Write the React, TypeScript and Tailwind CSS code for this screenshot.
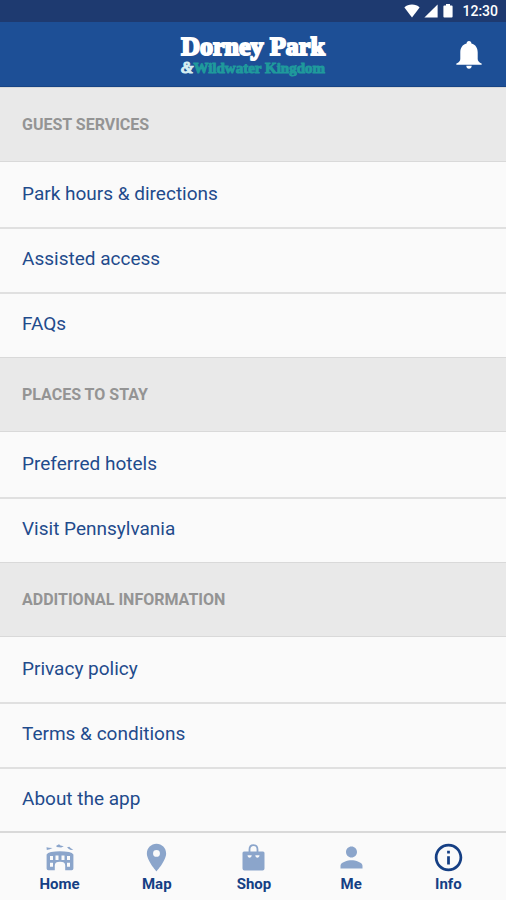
import type { ReactNode } from "react";
import { MdInfoOutline, MdPerson, MdPlace } from "react-icons/md";

const sections = [
  { title: "GUEST SERVICES", items: ["Park hours & directions", "Assisted access", "FAQs"] },
  { title: "PLACES TO STAY", items: ["Preferred hotels", "Visit Pennsylvania"] },
  { title: "ADDITIONAL INFORMATION", items: ["Privacy policy", "Terms & conditions", "About the app"] },
];

function StatusBar() {
  return (
    <div className="flex h-[22px] items-center justify-end gap-1 bg-[#1e3a70] pr-2 text-white">
      <svg className="h-[14px] w-[16px]" viewBox="0 0 16 14" fill="currentColor" aria-hidden="true">
        <path d="M8 13.6.4 3.4C2.400 1.600 5 .6 8 .6s5.600 1 7.600 2.800z" />
      </svg>
      <svg className="h-[14px] w-[14px]" viewBox="0 0 14 14" fill="currentColor" aria-hidden="true">
        <path d="M13.600.4v13.200H.4z" />
      </svg>
      <svg className="h-[14px] w-[12px]" viewBox="0 0 12 14" fill="currentColor" aria-hidden="true">
        <path d="M4 0h4v1.500h1.700q.9 0 .9.900v10.200q0 1-.9 1H2.300q-.9 0-.9-1V2.400q0-.9.9-.9H4z" />
      </svg>
      <span className="ml-1 text-[14px] leading-[20px] font-medium">12:30</span>
    </div>
  );
}

function Logo() {
  return (
    <h1 className="flex flex-col items-center pt-1 font-['Liberation_Serif',serif] font-bold whitespace-nowrap">
      <span className="text-[26px] leading-[24px] text-white [-webkit-text-stroke:2px_#fff] [paint-order:stroke]">Dorney Park</span>
      <span className="flex items-center text-[15px] leading-[18px] text-[#1f9a9c] [-webkit-text-stroke:1px_#1f9a9c]">
        <span className="text-[16px] italic text-[#d5eef2] [-webkit-text-stroke:1px_#d5eef2]">&amp;</span>
        Wildwater Kingdom
      </span>
    </h1>
  );
}

function BellIcon() {
  return (
    <svg className="h-7 w-[26px]" viewBox="0 0 26 28" fill="currentColor" aria-hidden="true">
      <path d="M13 0c1.500 0 2.400 1 2.400 2.500 4.200 1.100 6.300 4.400 6.300 8.900v6.300c0 2 .9 3.300 3.700 4.700.8.500.6 1.300-.3 1.300H.9c-.9 0-1.100-.8-.3-1.300 2.800-1.400 3.700-2.700 3.700-4.700v-6.300c0-4.500 2.100-7.800 6.300-8.900C10.600 1 11.500 0 13 0z" />
      <path d="M10.300 24.800h5.400c0 1.800-1.100 3-2.700 3s-2.700-1.200-2.700-3z" />
    </svg>
  );
}

function GateIcon() {
  return (
    <svg className="h-[27px] w-7" viewBox="0 0 28 27" fill="currentColor" aria-hidden="true">
      <path d="M.5 3.200 3 3.700l3.500.3-2.700 1.300-3 .8zM10.300 1.700 13 .2l1.500 1.300 3.300.7-2.600 1.200-4.600-.3zM21 3.200l2.300-.5 1.500 1.500 2.500 1.500-2.500.2-2-1z" />
      <path
        fillRule="evenodd"
        d="M.6 10.500Q1.500 8.500 5 8q9-1.400 18 0 3.500.5 4.400 2.500v14q0 1.700-1.700 1.700h-6.500v-5q0-3.400-5.200-3.400t-5.200 3.400v5H2.300q-1.700 0-1.700-1.700zM4 12v4h3v-4zm5.500-.5V16h3v-4.500zm6 0V16h3v-4.500zM21 12v4h3v-4zM4 18.700v4h3v-4zm17 0v4h3v-4z"
      />
    </svg>
  );
}

function BagIcon() {
  return (
    <svg className="h-[27px] w-[23px]" viewBox="0 0 23 27" fill="currentColor" aria-hidden="true">
      <path d="M7.500 10V5.600C7.500 2.800 9.100 1.100 11.500 1.100s4 1.700 4 4.500V10" fill="none" stroke="currentColor" strokeWidth="1.800" />
      <path
        fillRule="evenodd"
        d="M2 7.500h19q1.500 0 1.500 1.500v15.500q0 2-2 2h-18q-2 0-2-2V9Q.5 7.500 2 7.500zM5.500 11.300c0 3.300 4.200 3.300 4.200 0zm7.800 0c0 3.300 4.200 3.300 4.200 0z"
      />
    </svg>
  );
}

const tabs: { label: string; icon: ReactNode; active?: boolean }[] = [
  { label: "Home", icon: <GateIcon /> },
  { label: "Map", icon: <MdPlace size={33} /> },
  { label: "Shop", icon: <BagIcon /> },
  { label: "Me", icon: <MdPerson size={33} /> },
  { label: "Info", icon: <MdInfoOutline size={33} />, active: true },
];

export default function App() {
  return (
    <div className="flex min-h-screen flex-col bg-[#fafafa] font-['Roboto',sans-serif]">
      <StatusBar />
      <header className="grid h-[65px] grid-cols-[1fr_auto_1fr] items-center border-b border-[#174485] bg-[#1d4f96] text-white">
        <span />
        <Logo />
        <button type="button" aria-label="Notifications" className="mr-6 justify-self-end pt-0.5">
          <BellIcon />
        </button>
      </header>
      <main className="grow">
        {sections.map((section) => (
          <section key={section.title}>
            <h2 className="flex h-[75px] items-center border-y border-[#d9d9d9] bg-[#e9e9e9] px-[22px] text-[16px] leading-5 font-bold text-[#949494]">
              {section.title}
            </h2>
            <ul>
              {section.items.map((item) => (
                <li key={item} className="h-[65px] border-[#e0e0e0] pt-0.5 not-first:border-t-2 not-first:pt-0">
                  <a href="#" className="flex h-[60px] items-center px-[22px] text-[19px] leading-6 text-[#1f4b8c]">
                    {item}
                  </a>
                </li>
              ))}
            </ul>
          </section>
        ))}
      </main>
      <nav className="-mt-px grid grid-cols-5 border-t-2 border-[#d9d9d9] pt-2 pr-[9px] pb-[6px] pl-[11px]">
        {tabs.map((tab) => (
          <a key={tab.label} href="#" className="flex flex-col items-center text-[15px] leading-5 font-bold text-[#153f84]">
            <span className={tab.active ? "flex h-[33px] items-center text-[#153f84]" : "flex h-[33px] items-center text-[#8ba5cb]"}>
              {tab.icon}
            </span>
            {tab.label}
          </a>
        ))}
      </nav>
    </div>
  );
}
